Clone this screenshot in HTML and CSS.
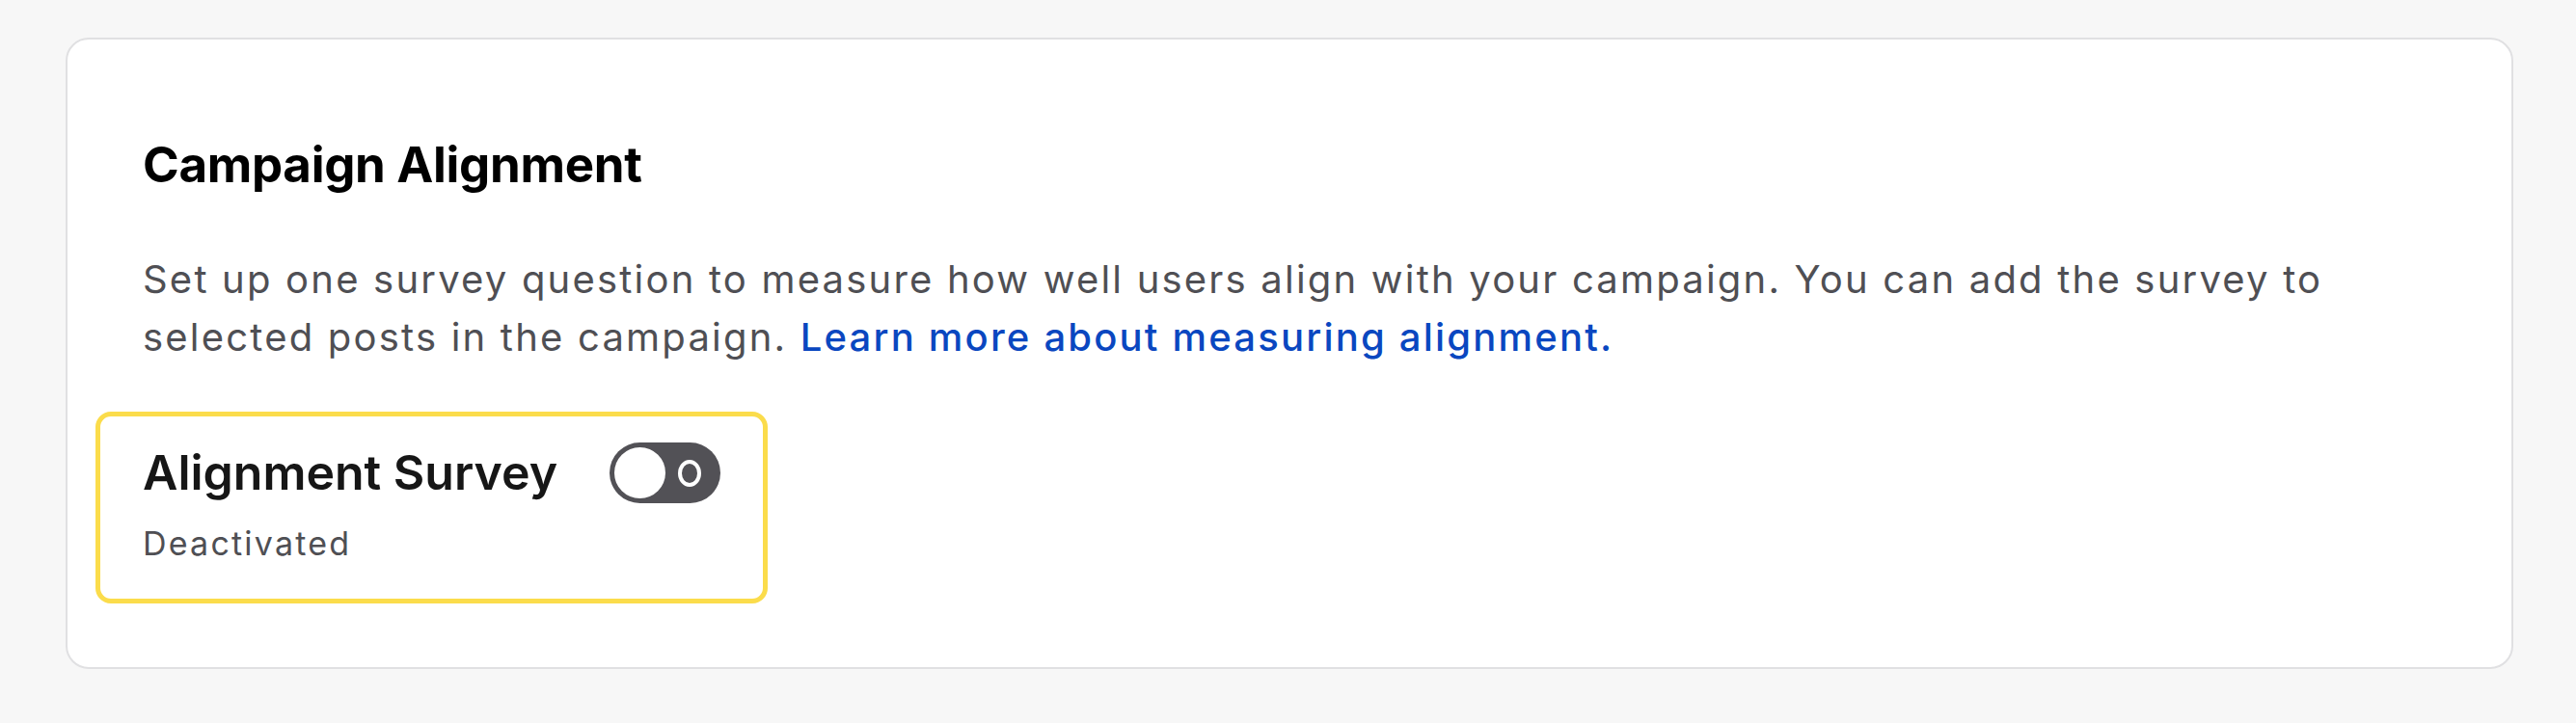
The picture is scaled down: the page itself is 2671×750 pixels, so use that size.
FILE: index.html
```html
<!DOCTYPE html>
<html lang="en">
<head>
<meta charset="utf-8">
<title>Campaign Alignment</title>
<link rel="stylesheet" href="styles.css">
</head>
<body>
<div class="page">
  <section class="card">
    <h2 class="title">Campaign Alignment</h2>
    <p class="desc">Set up one survey question to measure how well users align with your campaign. You can add the survey to selected posts in the campaign. <a class="link" href="#">Learn more about measuring alignment.</a></p>
    <div class="setting">
      <div class="setting-row">
        <span class="setting-name">Alignment Survey</span>
        <span class="toggle" role="switch" aria-checked="false">
          <svg width="115" height="63" viewBox="0 0 115 63">
            <rect x="0" y="0" width="115" height="63" rx="31.5" fill="#525156"/>
            <circle cx="31.5" cy="31.5" r="26.5" fill="#ffffff"/>
            <ellipse cx="83" cy="32" rx="10" ry="12" fill="none" stroke="#ffffff" stroke-width="4"/>
          </svg>
        </span>
      </div>
      <div class="setting-status">Deactivated</div>
    </div>
  </section>
</div>
</body>
</html>
```
FILE: styles.css
```css
html, body {
  margin: 0;
  padding: 0;
}
body {
  background: #f7f7f7;
  font-family: Inter, "Noto Sans", "Liberation Sans", sans-serif;
  width: 2671px;
  height: 750px;
  overflow: hidden;
}
.page {
  padding: 39px 65px 0 68px;
}
.card {
  box-sizing: border-box;
  height: 655px;
  background: #ffffff;
  border: 2px solid #e0e0e2;
  border-radius: 24px;
  padding: 0 78px;
}
.title {
  margin: 0;
  padding-top: 100px;
  font-size: 51px;
  line-height: 60px;
  font-weight: 700;
  color: #000000;
  letter-spacing: -0.3px;
}
.desc {
  margin: 59px 0 0 0;
  font-size: 40px;
  line-height: 60px;
  font-weight: 400;
  letter-spacing: 2.2px;
  color: #4f4f54;
}
.link {
  color: #0a47c0;
  font-weight: 500;
  text-decoration: none;
}
.setting {
  display: inline-block;
  margin-top: 47px;
  margin-left: -49px;
  border: 5px solid #fbdc4b;
  border-radius: 16px;
  padding: 24px 44px 35px 44px;
}
.setting-row {
  display: flex;
  align-items: center;
  gap: 54px;
}
.setting-name {
  font-size: 50px;
  line-height: 68px;
  font-weight: 600;
  color: #161616;
}
.toggle {
  display: flex;
  width: 115px;
  height: 63px;
}
.setting-status {
  margin-top: 18px;
  font-size: 34px;
  line-height: 44px;
  letter-spacing: 2.2px;
  color: #4f4f54;
}
```
